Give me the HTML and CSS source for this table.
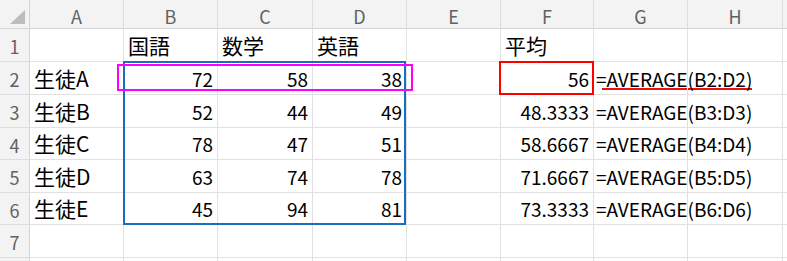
FILE: index.html
```html
<!DOCTYPE html>
<html lang="ja">
<head>
  <meta charset="UTF-8" />
  <title>Sheet1</title>
  <link rel="stylesheet" href="styles.css">
</head>
<body>
  <div class="sheet">
    <div class="grid">
      <!-- column headers -->
      <div class="corner"><span class="corner-tri"></span></div>
      <div class="colhead">A</div>
      <div class="colhead">B</div>
      <div class="colhead">C</div>
      <div class="colhead">D</div>
      <div class="colhead">E</div>
      <div class="colhead">F</div>
      <div class="colhead">G</div>
      <div class="colhead">H</div>
      <div class="colhead rest"></div>

      <!-- row 1 -->
      <div class="rowhead">1</div>
      <div class="cell"></div>
      <div class="cell">国語</div>
      <div class="cell">数学</div>
      <div class="cell">英語</div>
      <div class="cell"></div>
      <div class="cell">平均</div>
      <div class="cell"></div>
      <div class="cell"></div>
      <div class="cell rest"></div>

      <!-- row 2 -->
      <div class="rowhead">2</div>
      <div class="cell">生徒A</div>
      <div class="cell num">72</div>
      <div class="cell num">58</div>
      <div class="cell num">38</div>
      <div class="cell"></div>
      <div class="cell num">56</div>
      <div class="cell spill">=AVERAGE(B2:D2)</div>
      <div class="cell"></div>
      <div class="cell rest"></div>

      <!-- row 3 -->
      <div class="rowhead">3</div>
      <div class="cell">生徒B</div>
      <div class="cell num">52</div>
      <div class="cell num">44</div>
      <div class="cell num">49</div>
      <div class="cell"></div>
      <div class="cell num">48.3333</div>
      <div class="cell spill">=AVERAGE(B3:D3)</div>
      <div class="cell"></div>
      <div class="cell rest"></div>

      <!-- row 4 -->
      <div class="rowhead">4</div>
      <div class="cell">生徒C</div>
      <div class="cell num">78</div>
      <div class="cell num">47</div>
      <div class="cell num">51</div>
      <div class="cell"></div>
      <div class="cell num">58.6667</div>
      <div class="cell spill">=AVERAGE(B4:D4)</div>
      <div class="cell"></div>
      <div class="cell rest"></div>

      <!-- row 5 -->
      <div class="rowhead">5</div>
      <div class="cell">生徒D</div>
      <div class="cell num">63</div>
      <div class="cell num">74</div>
      <div class="cell num">78</div>
      <div class="cell"></div>
      <div class="cell num">71.6667</div>
      <div class="cell spill">=AVERAGE(B5:D5)</div>
      <div class="cell"></div>
      <div class="cell rest"></div>

      <!-- row 6 -->
      <div class="rowhead">6</div>
      <div class="cell">生徒E</div>
      <div class="cell num">45</div>
      <div class="cell num">94</div>
      <div class="cell num">81</div>
      <div class="cell"></div>
      <div class="cell num">73.3333</div>
      <div class="cell spill">=AVERAGE(B6:D6)</div>
      <div class="cell"></div>
      <div class="cell rest"></div>

      <!-- row 7 -->
      <div class="rowhead">7</div>
      <div class="cell"></div>
      <div class="cell"></div>
      <div class="cell"></div>
      <div class="cell"></div>
      <div class="cell"></div>
      <div class="cell"></div>
      <div class="cell"></div>
      <div class="cell"></div>
      <div class="cell rest"></div>

      <!-- row 8 (cut off) -->
      <div class="rowhead"></div>
      <div class="cell"></div>
      <div class="cell"></div>
      <div class="cell"></div>
      <div class="cell"></div>
      <div class="cell"></div>
      <div class="cell"></div>
      <div class="cell"></div>
      <div class="cell"></div>
      <div class="cell rest"></div>
    </div>

    <!-- annotations drawn over the sheet -->
    <div class="mark mark-range"></div>
    <div class="mark mark-row"></div>
    <div class="mark mark-avg"></div>
    <div class="mark mark-formula"></div>
  </div>
</body>
</html>
```

FILE: styles.css
```css
body {
  margin: 0;
  background: #fff;
  overflow: hidden;
}

.sheet {
  position: relative;
  width: 787px;
  height: 261px;
  overflow: hidden;
  font-family: "Noto Sans CJK JP", "Noto Sans", sans-serif;
}

.grid {
  display: grid;
  grid-template-columns: 30px 94px 94px 95px 94px 94px 93px 94px 95px 20px;
  grid-template-rows: 29px 33px 33px 33px 32px 33px 32px 33px 20px;
}

/* header strip */
.corner,
.colhead,
.rowhead {
  background: #f3f3f3;
  color: #616161;
  border-right: 1px solid #d4d4d4;
  border-bottom: 1px solid #d4d4d4;
  box-sizing: border-box;
  font-size: 18px;
  display: flex;
  align-items: center;
  justify-content: center;
}

.colhead {
  border-right-color: #dedede;
  padding-top: 4px;
}

.rowhead {
  border-bottom-color: #dedede;
  padding-top: 2px;
}

.corner {
  position: relative;
}

.corner-tri {
  position: absolute;
  right: 4px;
  bottom: 4px;
  width: 0;
  height: 0;
  border-left: 15px solid transparent;
  border-bottom: 14px solid #bcbcbc;
}

/* cells */
.cell {
  border-right: 1px solid #e1e1e1;
  border-bottom: 1px solid #e1e1e1;
  box-sizing: border-box;
  font-size: 21px;
  color: #000;
  display: flex;
  align-items: flex-end;
  padding: 0 4px 1px 4px;
  white-space: nowrap;
  line-height: 30px;
}

/* numbers and formulas use a tighter latin size */
.num {
  justify-content: flex-end;
  font-size: 19px;
  padding-bottom: 0;
}

.spill {
  overflow: visible;
  padding-left: 2px;
  padding-bottom: 0;
  font-size: 19px;
  position: relative;
  z-index: 1;
}

.rest {
  border-right: none;
}

/* coloured boxes */
.mark {
  position: absolute;
  box-sizing: border-box;
  pointer-events: none;
}

.mark-range {
  left: 123px;
  top: 61px;
  width: 283px;
  height: 164px;
  border: 2px solid #1a6ebf;
}

.mark-row {
  left: 117px;
  top: 64px;
  width: 296px;
  height: 27px;
  border: 2px solid #f0f;
}

.mark-avg {
  left: 499px;
  top: 61px;
  width: 95px;
  height: 34px;
  border: 2px solid #f00;
}

.mark-formula {
  left: 602px;
  top: 88px;
  width: 150px;
  height: 2px;
  background: #e81010;
}
```
